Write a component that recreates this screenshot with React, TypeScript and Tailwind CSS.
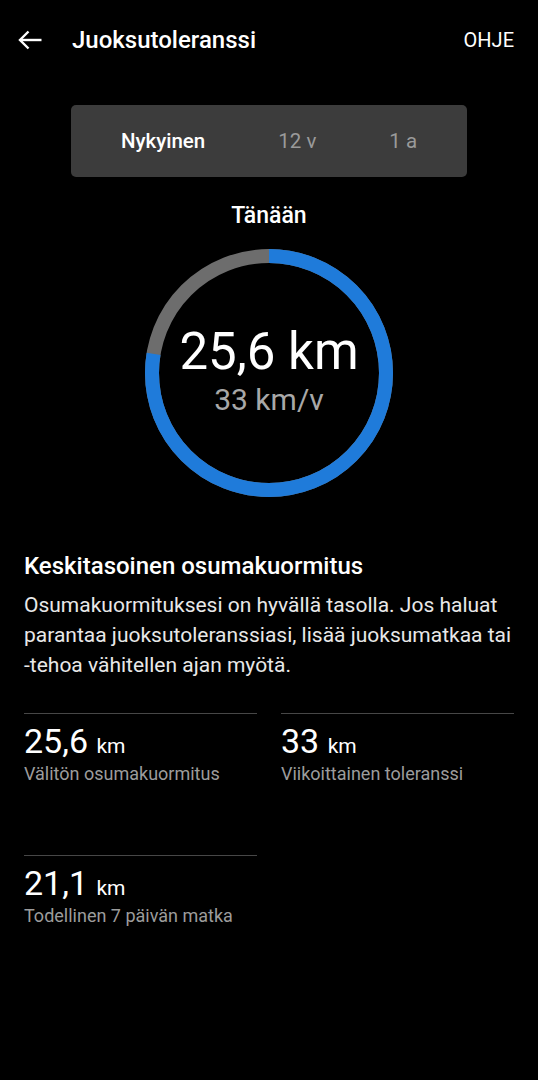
import { type ReactNode } from 'react';

const FONT = { fontFamily: 'Roboto, "Noto Sans", Arial, sans-serif' };

const SEGMENTS = ['Nykyinen', '12 v', '1 a'];

const STATS = [
  { value: '25,6', unit: 'km', label: 'Välitön osumakuormitus' },
  { value: '33', unit: 'km', label: 'Viikoittainen toleranssi' },
  { value: '21,1', unit: 'km', label: 'Todellinen 7 päivän matka' },
];

function BackArrow() {
  return (
    <svg width="24" height="20" viewBox="0 0 24 20" fill="none" stroke="white" strokeWidth="2.4">
      <path d="M2 10H23.5" />
      <path d="M10.5 1.5L2 10l8.5 8.5" />
    </svg>
  );
}

function Ring({ ratio, children }: { ratio: number; children: ReactNode }) {
  const r = 117;
  const c = 2 * Math.PI * r;
  return (
    <div className="relative mx-auto h-[248px] w-[248px]">
      <svg width="248" height="248" viewBox="0 0 248 248">
        <circle cx="124" cy="124" r={r} fill="none" stroke="#6d6d6d" strokeWidth="14" />
        <circle
          cx="124"
          cy="124"
          r={r}
          fill="none"
          stroke="#1f7bda"
          strokeWidth="14"
          strokeDasharray={`${c * ratio} ${c}`}
          transform="rotate(-90 124 124)"
        />
      </svg>
      <div className="absolute inset-0 flex flex-col items-center justify-center pb-[4px]">
        {children}
      </div>
    </div>
  );
}

function Stat({ value, unit, label }: { value: string; unit: string; label: string }) {
  return (
    <div className="border-t border-[#474747] pt-[7px]">
      <div className="text-[34px] leading-[40px] text-white">
        {value} <span className="text-[21px]">{unit}</span>
      </div>
      <div className="-mt-[3px] text-[18px] leading-[22px] text-[#9c9c9c]">{label}</div>
    </div>
  );
}

export default function App() {
  return (
    <div className="min-h-[1080px] w-[538px] bg-black text-white" style={FONT}>
      <header className="flex h-[80px] items-center pl-[18px] pr-[24px]">
        <BackArrow />
        <h1 className="ml-[30px] flex-1 text-[24px] font-medium leading-[30px]">Juoksutoleranssi</h1>
        <span className="text-[20px] leading-[28px]">OHJE</span>
      </header>

      <div className="mx-[71px] mt-[25px] flex h-[72px] items-center justify-center gap-[73px] rounded-[5px] bg-[#3c3c3c]">
        {SEGMENTS.map((s, i) => (
          <span
            key={s}
            className={
              i === 0
                ? 'text-[20.5px] font-medium leading-[28px] text-white'
                : 'text-[20.5px] leading-[28px] text-[#9a9a9a]'
            }
          >
            {s}
          </span>
        ))}
      </div>

      <div className="mt-[25px] text-center text-[23px] font-medium leading-[28px]">Tänään</div>

      <div className="mt-[19px]">
        <Ring ratio={25.6 / 33}>
          <div className="text-[51px] leading-[56px] text-white">25,6 km</div>
          <div className="mt-[2px] text-[30px] leading-[36px] text-[#a8a8a8]">33 km/v</div>
        </Ring>
      </div>

      <section className="mt-[54px] px-6">
        <h2 className="text-[24px] font-medium leading-[30px]">Keskitasoinen osumakuormitus</h2>
        <p className="mt-[9px] text-[21px] leading-[30px] text-[#e8e8e8]">
          Osumakuormituksesi on hyvällä tasolla. Jos haluat parantaa juoksutoleranssiasi, lisää
          juoksumatkaa tai <span className="whitespace-nowrap">-tehoa</span> vähitellen ajan myötä.
        </p>
      </section>

      <div className="mt-[33px] grid grid-cols-2 gap-x-6 gap-y-[70px] px-6">
        {STATS.map((s) => (
          <Stat key={s.label} {...s} />
        ))}
      </div>
    </div>
  );
}
